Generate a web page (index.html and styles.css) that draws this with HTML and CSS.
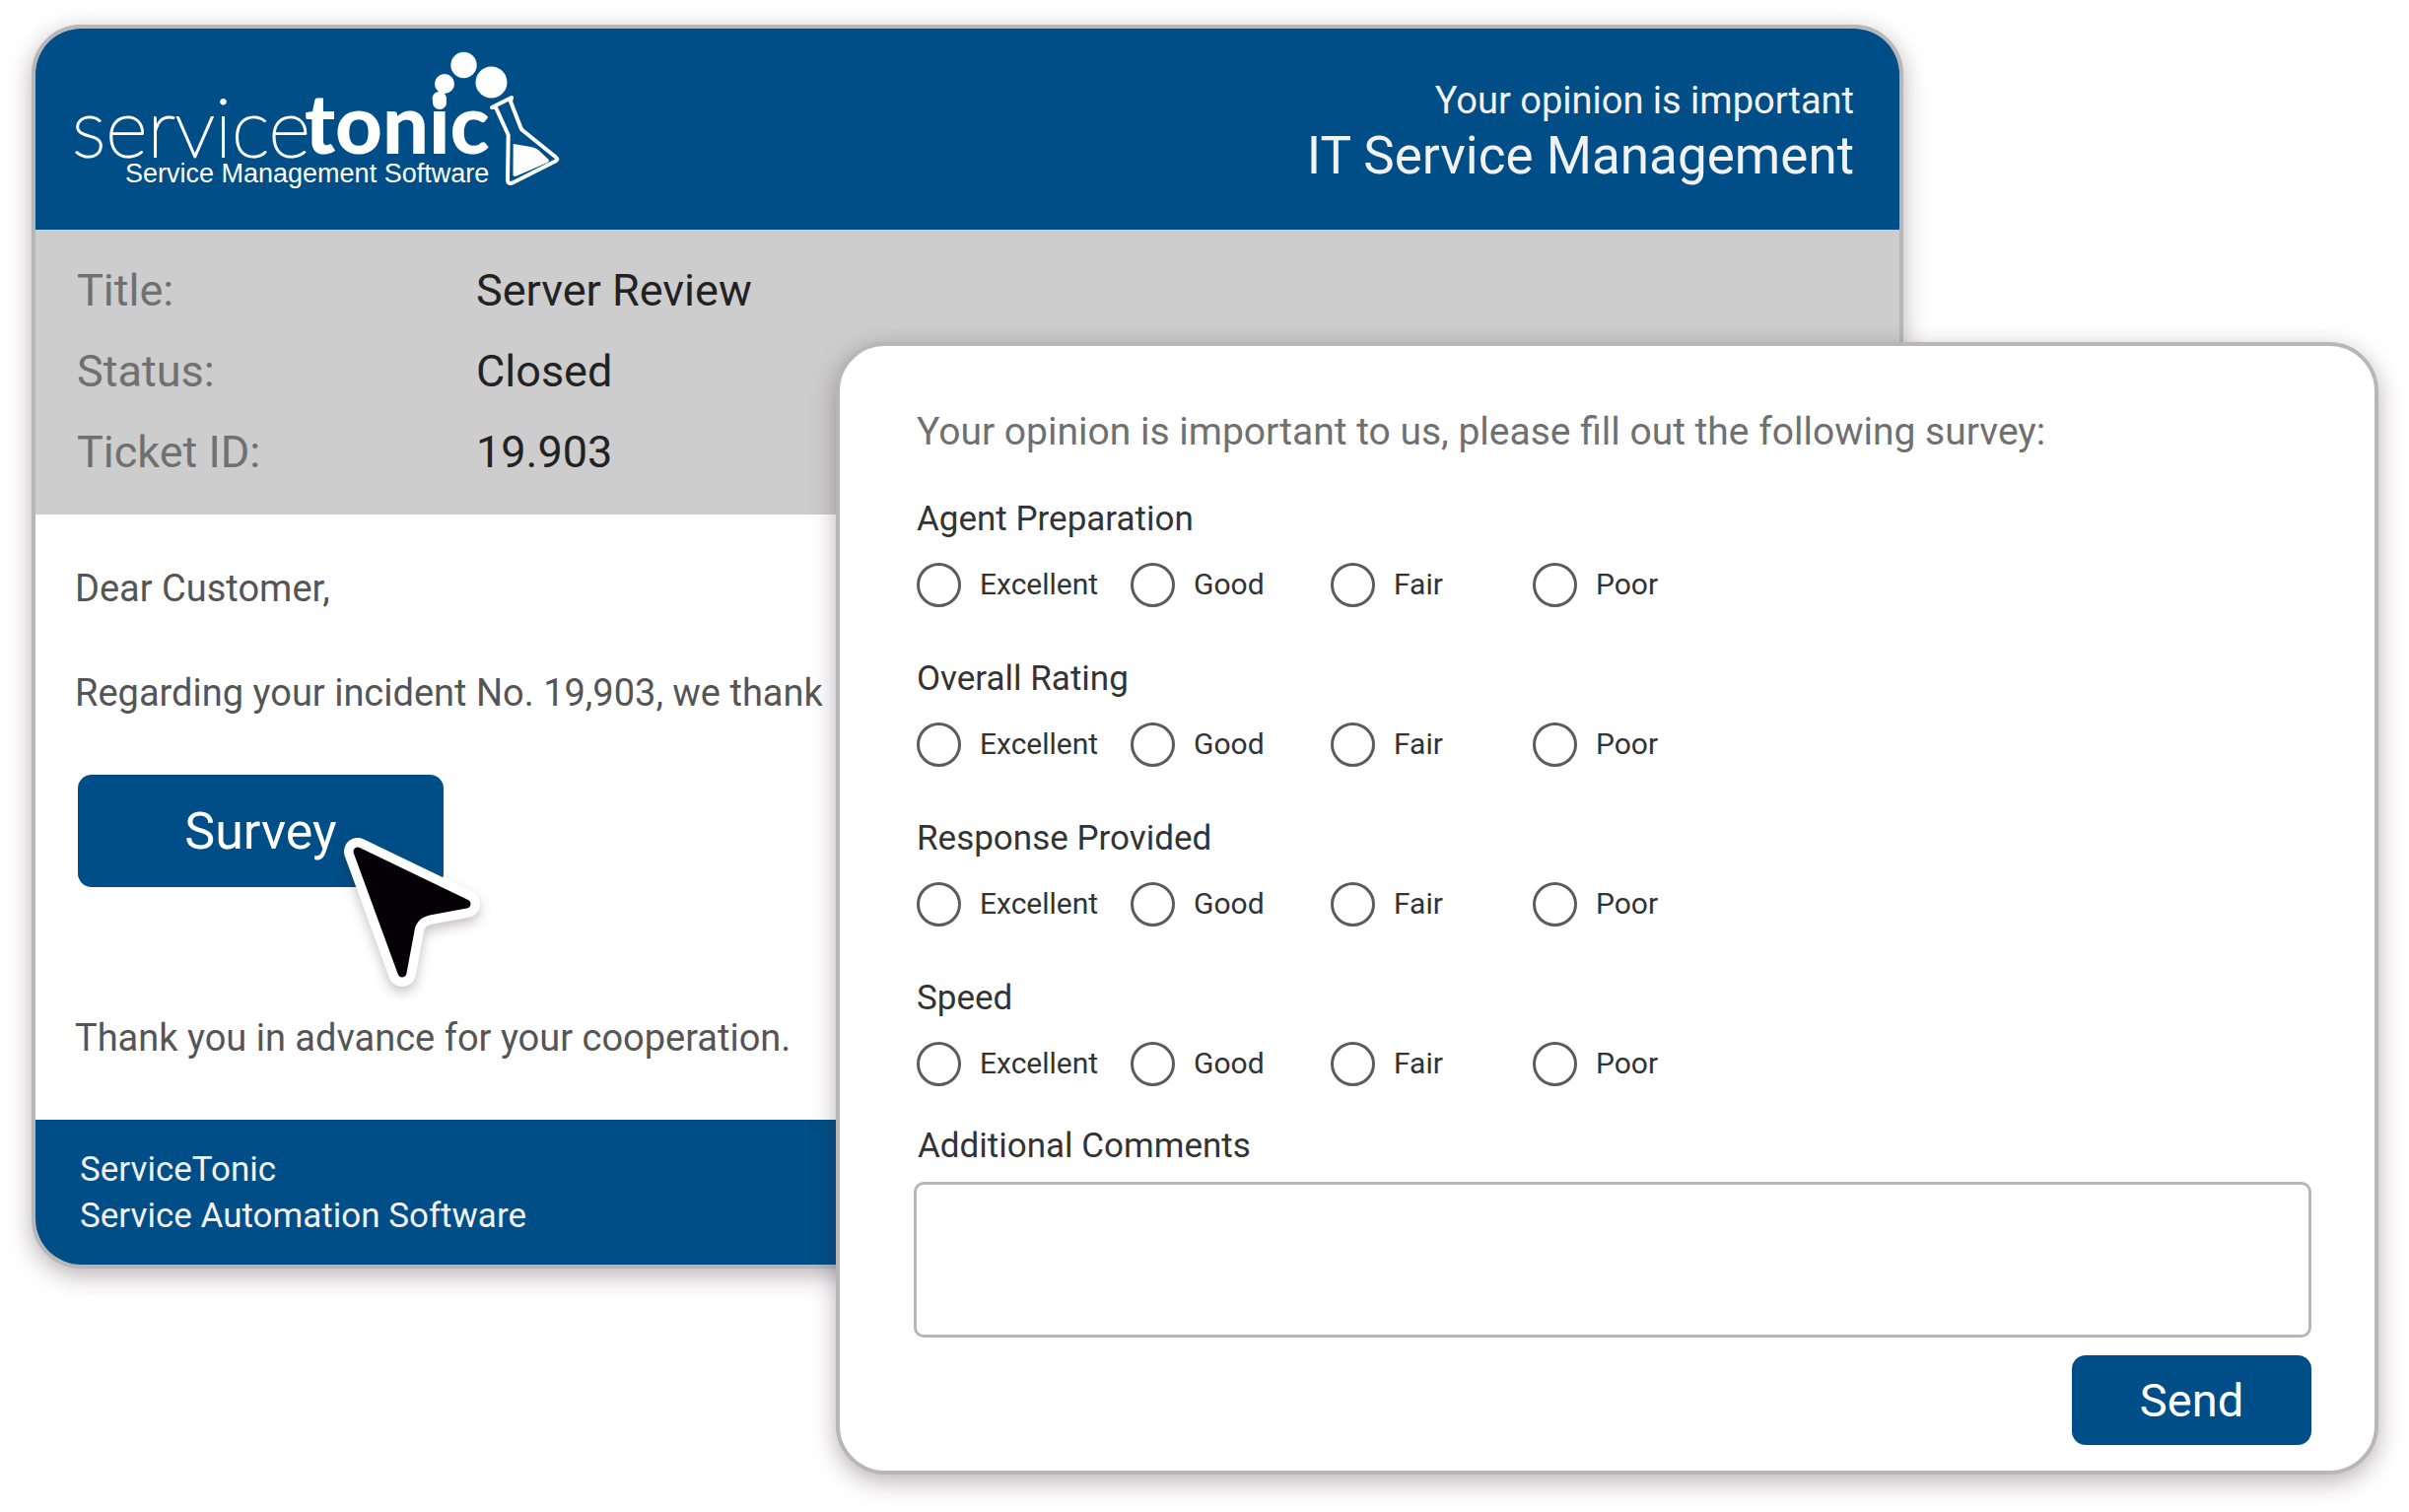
FILE: index.html
```html
<!DOCTYPE html>
<html lang="en">
<head>
<meta charset="utf-8">
<meta name="viewport" content="width=device-width, initial-scale=1">
<title>ServiceTonic survey</title>
<link rel="stylesheet" href="styles.css">
</head>
<body>
<main class="stage">
  <article class="card email">
    <header class="email-header">
      <svg class="logo" viewBox="76 50 492 140" role="img" aria-label="servicetonic, Service Management Software">
        <text class="logo-thin" x="73" y="159">service</text>
        <text class="logo-bold" x="309" y="156">tonic</text>
        <text class="logo-tag" x="127" y="185">Service Management Software</text>
        <g fill="#fff">
          <circle cx="446" cy="104" r="7"/>
          <circle cx="451" cy="85" r="10"/>
          <circle cx="470.500" cy="66" r="13.200"/>
          <circle cx="498.500" cy="83.500" r="16"/>
          <path d="M520.700 146l18 3c5 1 8 3 10.500 6l6.500 6c2 2 1.500 3-.5 4l-31 13.500c-2.500 1-3.700.5-3.700-1.500z"/>
        </g>
        <path class="logo-flask" d="M499 109l20-10-1 4 10.500 27c.5 1 1 2 2 2.500L564 159.500c2 1.500 1.500 3-.5 4L521 185c-4 2-6 1-6-3l.7-45-12.700-28z"/>
      </svg>
      <div class="email-heading">
        <p class="tagline">Your opinion is important</p>
        <h1>IT Service Management</h1>
      </div>
    </header>
    <dl class="details">
      <dt>Title:</dt><dd>Server Review</dd>
      <dt>Status:</dt><dd>Closed</dd>
      <dt>Ticket ID:</dt><dd>19.903</dd>
    </dl>
    <div class="message">
      <p>Dear Customer,</p>
      <p>Regarding your incident No. 19,903, we thank</p>
      <div class="survey-action">
        <button type="button" class="button button-survey">Survey</button>
        <svg class="cursor" viewBox="340 844 160 180" aria-hidden="true">
          <path class="cursor-edge" d="M362 864L472 917 434 924Q417 928 415 944L407 987z"/>
          <path class="cursor-fill" d="M362 864L472 917 434 924Q417 928 415 944L407 987z"/>
        </svg>
      </div>
      <p class="thanks">Thank you in advance for your cooperation.</p>
    </div>
    <footer class="email-footer">
      <p>ServiceTonic</p>
      <p>Service Automation Software</p>
    </footer>
  </article>

  <form class="card survey">
    <h2>Your opinion is important to us, please fill out the following survey:</h2>
    <fieldset>
      <legend>Agent Preparation</legend>
      <div class="options">
        <label><input type="radio" name="preparation">Excellent</label>
        <label><input type="radio" name="preparation">Good</label>
        <label><input type="radio" name="preparation">Fair</label>
        <label><input type="radio" name="preparation">Poor</label>
      </div>
    </fieldset>
    <fieldset>
      <legend>Overall Rating</legend>
      <div class="options">
        <label><input type="radio" name="overall">Excellent</label>
        <label><input type="radio" name="overall">Good</label>
        <label><input type="radio" name="overall">Fair</label>
        <label><input type="radio" name="overall">Poor</label>
      </div>
    </fieldset>
    <fieldset>
      <legend>Response Provided</legend>
      <div class="options">
        <label><input type="radio" name="response">Excellent</label>
        <label><input type="radio" name="response">Good</label>
        <label><input type="radio" name="response">Fair</label>
        <label><input type="radio" name="response">Poor</label>
      </div>
    </fieldset>
    <fieldset>
      <legend>Speed</legend>
      <div class="options">
        <label><input type="radio" name="speed">Excellent</label>
        <label><input type="radio" name="speed">Good</label>
        <label><input type="radio" name="speed">Fair</label>
        <label><input type="radio" name="speed">Poor</label>
      </div>
    </fieldset>
    <label class="comments-label" for="comments">Additional Comments</label>
    <textarea id="comments" name="comments"></textarea>
    <button type="submit" class="button button-send">Send</button>
  </form>
</main>
</body>
</html>
```
FILE: styles.css
```css
:root {
  --blue: #004e87;
  --line: #b7b7b7;
}

* { box-sizing: border-box; }

body {
  margin: 0;
  background: #fff;
  font-family: Roboto, "Liberation Sans", sans-serif;
}

h1, h2, p, dl, dd, fieldset, legend {
  margin: 0;
  padding: 0;
  border: 0;
  font-weight: 400;
}

/* The survey card overlaps the e-mail card in the middle column. */
.stage {
  display: grid;
  grid-template-columns: 816fr 1083fr 482fr;
  align-items: start;
  padding: 25px 31px 38px 32px;
}

.card {
  grid-row: 1;
  border: 4px solid var(--line);
  border-radius: 50px;
  background: #fff;
  box-shadow: 0 7px 24px rgba(50, 30, 40, 0.34);
}

/* E-mail */
.email {
  grid-column: 1 / 3;
  overflow: hidden;
}

.email-header {
  display: flex;
  justify-content: space-between;
  align-items: flex-end;
  padding: 21px 46px 43px 40px;
  background: var(--blue);
  color: #f2f2f2;
  text-align: right;
}

.tagline { font-size: 38px; line-height: 48px; }
h1 { font-size: 53px; line-height: 64px; }

.logo {
  width: 492px;
  height: 140px;
  overflow: visible;
}

.logo text { fill: #fff; }
.logo .logo-thin { font: 100 82px Lato, sans-serif; stroke: #fff; stroke-width: 2; }
.logo-bold { font: 900 83px Lato, sans-serif; }
.logo-tag { font: 27px "Liberation Sans", sans-serif; }

.logo-flask {
  fill: none;
  stroke: #fff;
  stroke-width: 4;
  stroke-linejoin: round;
}

.details {
  display: grid;
  grid-template-columns: 405px 1fr;
  padding: 21px 42px 22px;
  background: #cdcdcd;
  font-size: 45px;
  line-height: 82px;
}

.details dt { color: #707070; }
.details dd { color: #222; }

.message {
  display: flex;
  flex-direction: column;
  gap: 60px;
  padding: 52px 40px 60px;
  color: #555;
  font-size: 38px;
  line-height: 46px;
}

.survey-action {
  position: relative;
  align-self: flex-start;
  padding-left: 3px;
}

.thanks { margin-top: 70px; }

.button {
  display: block;
  padding: 0;
  border: 0;
  border-radius: 14px;
  background: var(--blue);
  color: #fff;
  font-family: inherit;
}

.button-survey {
  width: 371px;
  height: 114px;
  font-size: 52px;
}

.cursor {
  position: absolute;
  left: 265px;
  top: 58px;
  width: 160px;
  height: 180px;
  filter: drop-shadow(0 6px 6px rgba(40, 20, 30, 0.25));
}

.cursor path { stroke-linejoin: round; }
.cursor-edge { fill: #fff; stroke: #fff; stroke-width: 28; }
.cursor-fill { fill: #050005; stroke: #050005; stroke-width: 9; }

.email-footer {
  padding: 27px 45px 26px;
  background: var(--blue);
  color: #f2f2f2;
  font-size: 35px;
  line-height: 47px;
}

/* Survey */
.survey {
  grid-column: 2 / 4;
  display: flex;
  flex-direction: column;
  margin-top: 322px;
  padding: 64px 64px 26px 75px;
  color: #333;
}

h2 {
  padding-left: 3px;
  margin-bottom: 44px;
  color: #707070;
  font-size: 39px;
  line-height: 46px;
}

fieldset {
  min-width: 0;
  padding-left: 3px;
  margin-bottom: 52px;
}

fieldset:last-of-type { margin-bottom: 40px; }

legend, .comments-label {
  font-size: 35px;
  line-height: 44px;
}

.comments-label { padding-left: 4px; }

.options {
  display: grid;
  grid-template-columns: 217px 203px 205px 1fr;
  margin-top: 22px;
  font-size: 30px;
  line-height: 44px;
}

.options label {
  display: flex;
  gap: 19px;
}

input[type="radio"] {
  appearance: none;
  flex: none;
  width: 45px;
  height: 45px;
  margin: 0;
  border: 3px solid #5c5c5c;
  border-radius: 50%;
}

input[type="radio"]:checked { box-shadow: inset 0 0 0 9px #fff, inset 0 0 0 22px var(--blue); }

.options { height: 44px; }

textarea {
  width: 100%;
  height: 158px;
  margin: 14px 0 18px;
  padding: 12px 16px;
  border: 3px solid var(--line);
  border-radius: 10px;
  font: 30px/40px Roboto, sans-serif;
  resize: none;
}

.button-send {
  align-self: flex-end;
  width: 243px;
  height: 91px;
  font-size: 47px;
}
```
